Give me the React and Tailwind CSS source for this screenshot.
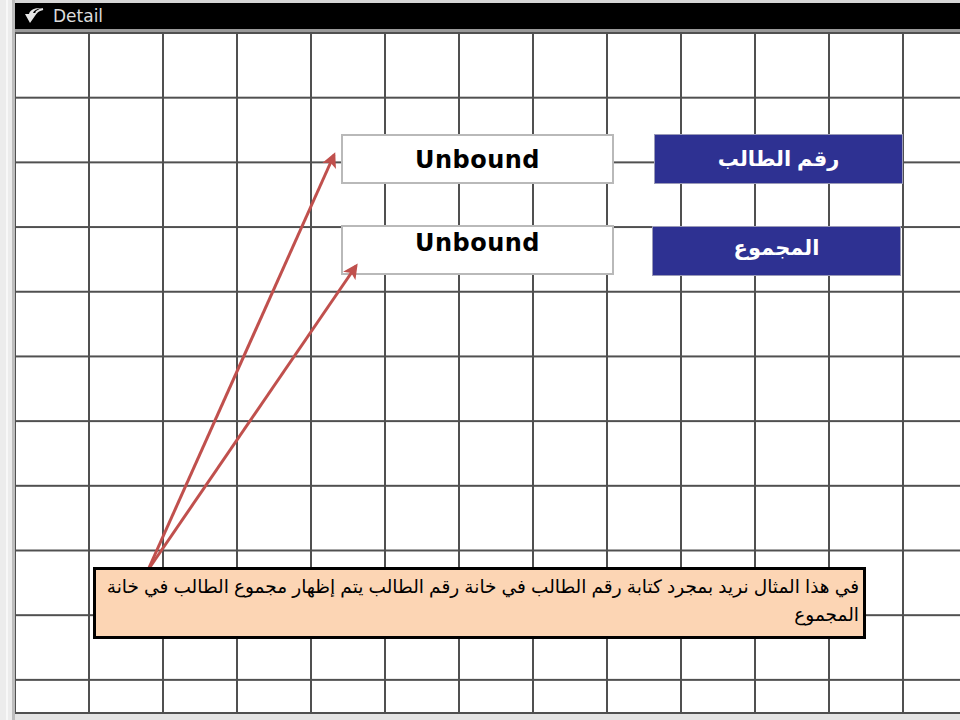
import React from 'react'

const ARABIC = { fontFamily: '"Liberation Sans", "DejaVu Sans", Arial, sans-serif' }

// Little section marker shown on the left of the "Detail" band.
function SectionMarker() {
  return (
    <svg width="20" height="16" viewBox="0 0 20 16" className="shrink-0">
      <path d="M19 1 C14 0 10 2 9 5 L13 5 L6 15 L1 6 L5 6 C6 2 11 -1 19 1 Z" fill="#e6e6e6" />
      <path d="M19 1 C15 2 13 3 12 5" stroke="#e6e6e6" strokeWidth="2" fill="none" />
    </svg>
  )
}

function TextBox({ className }) {
  return (
    <div
      className={`absolute flex h-[50px] w-[273px] justify-center border-2 border-[#b9b9b9] bg-white ${className}`}
    >
      <span className="text-[24px] font-bold leading-none tracking-[0.5px] text-black" style={{ fontFamily: '"DejaVu Sans", Verdana, sans-serif' }}>
        Unbound
      </span>
    </div>
  )
}

function Label({ className, children }) {
  return (
    <div
      dir="rtl"
      className={`absolute flex h-[50px] w-[249px] items-center justify-center border border-[#9a9ab8] bg-[#2e3192] text-[21px] font-bold text-white ${className}`}
      style={ARABIC}
    >
      {children}
    </div>
  )
}

export default function App() {
  return (
    <div className="flex h-[720px] w-[960px] overflow-hidden bg-[#e4e4e4]">
      {/* vertical ruler */}
      <div className="flex h-full w-[15px] shrink-0 bg-[#ececec]">
        <div className="ml-[6px] h-full w-[2px] bg-[#f8f8f8]" />
        <div className="ml-[4px] h-full w-[3px] bg-[#bdbdbd]" />
      </div>

      <div className="flex min-w-0 flex-1 flex-col">
        <div className="h-[3px] shrink-0 bg-[#d6d6d6]" />
        <div className="flex h-[26px] shrink-0 items-center gap-[9px] bg-black pl-[9px]">
          <SectionMarker />
          <span className="text-[17px] leading-none text-[#dcdcdc]" style={{ fontFamily: '"DejaVu Sans", sans-serif' }}>
            Detail
          </span>
        </div>
        <div className="h-[3px] shrink-0 bg-[#9a9a9a]" />

        {/* design canvas with the layout grid */}
        <div className="relative h-[680px] shrink-0 bg-white bg-[linear-gradient(to_right,#505050_2px,transparent_2px),linear-gradient(to_bottom,#505050_2px,transparent_2px)] bg-[size:74px_64.7px] bg-[position:-1px_0px]">
          <TextBox className="left-[326px] top-[102px] pt-[12px]" />
          <TextBox className="left-[326px] top-[193px] pt-[4px]" />
          <Label className="left-[639px] top-[102px]">رقم الطالب</Label>
          <Label className="left-[637px] top-[194px] pb-[6px]">المجموع</Label>

          <svg className="pointer-events-none absolute left-0 top-0" width="945" height="680">
            <defs>
              <marker id="head" markerWidth="5" markerHeight="5" refX="4" refY="2.5" orient="auto" markerUnits="strokeWidth">
                <path d="M0 0 L5 2.5 L0 5 L1.2 2.5 Z" fill="#c0504d" />
              </marker>
            </defs>
            <line x1="133" y1="538" x2="319" y2="123" stroke="#c0504d" strokeWidth="3" markerEnd="url(#head)" />
            <line x1="133" y1="538" x2="341" y2="234" stroke="#c0504d" strokeWidth="3" markerEnd="url(#head)" />
          </svg>

          <div
            dir="rtl"
            className="absolute left-[78px] top-[535px] h-[72px] w-[773px] border-[3px] border-black bg-[#fcd5b4] px-[4px] pt-[3px] text-right text-[18.5px] leading-[28px] text-black"
            style={ARABIC}
          >
            في هذا المثال نريد بمجرد كتابة رقم الطالب في خانة رقم الطالب يتم إظهار مجموع الطالب في خانة المجموع
          </div>
        </div>
        <div className="h-[2px] shrink-0 bg-[#505050]" />
      </div>
    </div>
  )
}
